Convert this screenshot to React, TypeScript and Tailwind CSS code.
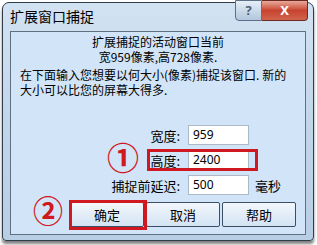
import React from 'react';

const Field: React.FC<{ label: string; value: string; unit?: string }> = ({ label, value, unit }) => (
  <div className="flex items-center h-[20px]">
    <span className="w-[177px] text-right pr-[8px] text-[13px] leading-none text-black">{label}</span>
    <div className="w-[61px] h-[20px] bg-white border border-[#abb8c6] flex items-center pl-[4px] text-[12px] text-black font-['Noto_Sans','Liberation_Sans',sans-serif]">
      {value}
    </div>
    {unit && <span className="pl-[6px] text-[13px] leading-none text-black">{unit}</span>}
  </div>
);

const Btn: React.FC<{ label: string }> = ({ label }) => (
  <button className="w-[74px] h-[25px] border border-[#3a4f66] rounded-[2px] bg-gradient-to-b from-[#f2f7fc] to-[#d3e3f3] text-[13px] text-black leading-none">
    {label}
  </button>
);

export default function App() {
  return (
    <div className="w-[317px] h-[245px] bg-white overflow-hidden font-['Noto_Sans_CJK_SC','Noto_Sans',sans-serif]">
      <div className="ml-[2px] mt-[2px] w-[312px] h-[239px] rounded-t-[7px] rounded-b-[4px] border border-[#2e3c4c] bg-gradient-to-b from-[#d2e2f2] via-[#c2d6ea] to-[#b8cee4] flex flex-col px-[7px] pb-[5px] shadow-[0_3px_3px_rgba(0,0,0,0.5)]">
        <div className="h-[28px] shrink-0 flex justify-between">
          <span className="pt-[6px] text-[14px] leading-none text-black">扩展窗口捕捉</span>
          <div className="flex -mt-[3px] mr-[-2px] h-[21px]">
            <div className="w-[27px] h-full border border-[#5b6f86] rounded-bl-[4px] bg-gradient-to-b from-[#e6eef7] to-[#b2c6dc] flex items-center justify-center text-[13px] font-bold text-[#4b5f76] font-['Noto_Sans',sans-serif]">
              ?
            </div>
            <div className="w-[46px] h-full border border-[#6b2b23] border-l-0 rounded-br-[4px] bg-gradient-to-b from-[#e8a89b] via-[#c7432e] to-[#d0644e] flex items-center justify-center text-[13px] font-bold text-white font-['Noto_Sans',sans-serif]">
              X
            </div>
          </div>
        </div>
        <div className="relative flex-1 min-h-0 border border-[#5f7081] bg-[#d2e5f8] flex flex-col">
          <div className="pt-[2px] text-center text-[12px] leading-[15px] text-black">
            <div>扩展捕捉的活动窗口当前</div>
            <div>宽959像素,高728像素.</div>
          </div>
          <div className="mt-[3px] pl-[9px] text-[12px] leading-[15px] text-black whitespace-nowrap">
            <div>在下面输入您想要以何大小(像素)捕捉该窗口. 新的</div>
            <div>大小可以比您的屏幕大得多.</div>
          </div>
          <div className="mt-[28px] flex flex-col gap-[5px]">
            <Field label="宽度:" value="959" />
            <Field label="高度:" value="2400" />
            <Field label="捕捉前延迟:" value="500" unit="毫秒" />
          </div>
          <div className="mt-[7px] pl-[59px] flex gap-[2px]">
            <Btn label="确定" />
            <Btn label="取消" />
            <Btn label="帮助" />
          </div>
          <div className="absolute left-[136px] top-[117px] w-[111px] h-[22px] border-[3px] border-[#cf1820]" />
          <div className="absolute left-[58px] top-[168px] w-[78px] h-[30px] border-[3px] border-[#cf1820]" />
          <span className="absolute left-[96px] top-[108px] text-[32px] font-bold leading-none text-[#cf1820]">①</span>
          <span className="absolute left-[22px] top-[162px] text-[30px] font-bold leading-none text-[#cf1820]">②</span>
        </div>
      </div>
    </div>
  );
}
